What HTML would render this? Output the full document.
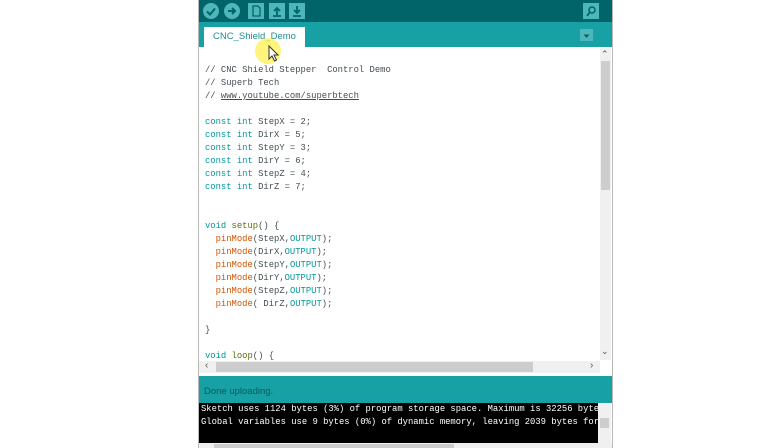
<!DOCTYPE html>
<html><head><style>
body{margin:0;width:768px;height:448px;background:#fff;position:relative;overflow:hidden;font-family:"Liberation Sans",sans-serif}
.a{position:absolute}
.code{font-family:"Liberation Mono",monospace;font-size:8.85px;color:#434f54;white-space:pre;line-height:13px}
.k{color:#00979c}.f{color:#5e6d03}.p{color:#d35400}
.btn{position:absolute;top:3px;width:16px;height:16px}
</style></head><body>
<div class="a" style="left:198px;top:0;width:415px;height:448px;background:#fff;border-left:1px solid #b8b8b8;border-right:1px solid #b8b8b8;box-sizing:border-box"></div>
<div class="a" style="left:199px;top:0;width:413px;height:22px;background:#006468"></div>
<div class="btn" style="left:203px;border-radius:50%;background:#4db7bb"><svg width="16" height="16"><path d="M4 8.5l3 3 5-6" stroke="#006468" stroke-width="2" fill="none"/></svg></div>
<div class="btn" style="left:224px;border-radius:50%;background:#4db7bb"><svg width="16" height="16"><path d="M4 8h7M8 5l3 3-3 3" stroke="#006468" stroke-width="2" fill="none"/></svg></div>
<div class="btn" style="left:248px;background:#4db7bb"><svg width="16" height="16"><path d="M5 3h5l2 2v8H5z" stroke="#006468" stroke-width="1.3" fill="none"/></svg></div>
<div class="btn" style="left:269px;background:#4db7bb"><svg width="16" height="16"><path d="M8 12V5M5 8l3-3 3 3M4 13h8" stroke="#006468" stroke-width="1.8" fill="none"/></svg></div>
<div class="btn" style="left:289px;background:#4db7bb"><svg width="16" height="16"><path d="M8 3v7M5 7l3 3 3-3M4 13h8" stroke="#006468" stroke-width="1.8" fill="none"/></svg></div>
<div class="btn" style="left:583px;background:#4db7bb"><svg width="16" height="16"><circle cx="9" cy="7" r="3" stroke="#006468" stroke-width="1.5" fill="none"/><path d="M7 9l-3 4" stroke="#006468" stroke-width="1.8"/></svg></div>
<div class="a" style="left:199px;top:22px;width:413px;height:25px;background:#17a1a5"></div>
<div class="a" style="left:204px;top:27px;width:101px;height:20px;background:#fff;font-size:9.5px;color:#1d8e93;line-height:20px;text-align:center">CNC_Shield_Demo</div>
<div class="a" style="left:255px;top:38px;width:26px;height:26px;border-radius:50%;background:rgba(255,240,80,.75)"></div>
<svg class="a" style="left:268px;top:45px" width="12" height="18"><path d="M1 1v13l3-3 2.5 5 2-1-2.5-5h4z" fill="#fff" stroke="#333" stroke-width="1"/></svg>
<div class="a" style="left:580px;top:29px;width:13px;height:12px;background:#4db7bb"><svg width="13" height="12"><path d="M3.5 4.5h6l-3 3.5z" fill="#006468"/></svg></div>
<div class="a code" style="left:205px;top:64px">// CNC Shield Stepper  Control Demo
// Superb Tech
// <u>www.youtube.com/superbtech</u>

<span class="k">const</span> <span class="k">int</span> StepX = 2;
<span class="k">const</span> <span class="k">int</span> DirX = 5;
<span class="k">const</span> <span class="k">int</span> StepY = 3;
<span class="k">const</span> <span class="k">int</span> DirY = 6;
<span class="k">const</span> <span class="k">int</span> StepZ = 4;
<span class="k">const</span> <span class="k">int</span> DirZ = 7;


<span class="k">void</span> <span class="f">setup</span>() {
  <span class="p">pinMode</span>(StepX,<span class="k">OUTPUT</span>);
  <span class="p">pinMode</span>(DirX,<span class="k">OUTPUT</span>);
  <span class="p">pinMode</span>(StepY,<span class="k">OUTPUT</span>);
  <span class="p">pinMode</span>(DirY,<span class="k">OUTPUT</span>);
  <span class="p">pinMode</span>(StepZ,<span class="k">OUTPUT</span>);
  <span class="p">pinMode</span>( DirZ,<span class="k">OUTPUT</span>);

}

<span class="k">void</span> <span class="f">loop</span>() {</div>
<div class="a" style="left:600px;top:48px;width:11px;height:312px;background:#f0f0f0"></div>
<div class="a" style="left:601px;top:61px;width:9px;height:129px;background:#cdcdcd"></div>
<div class="a" style="left:601px;top:49px;font-size:9px;color:#555">&#8963;</div>
<div class="a" style="left:601px;top:346px;font-size:9px;color:#555">&#8964;</div>
<div class="a" style="left:199px;top:361px;width:401px;height:12px;background:#f0f0f0"></div>
<div class="a" style="left:216px;top:362px;width:317px;height:10px;background:#cdcdcd"></div>
<div class="a" style="left:205px;top:360px;font-size:10px;color:#555">&lsaquo;</div>
<div class="a" style="left:590px;top:360px;font-size:10px;color:#555">&rsaquo;</div>
<div class="a" style="left:199px;top:376px;width:413px;height:27px;background:#17a1a5;font-size:9.5px;color:#0c5a5e;line-height:32px;padding-left:5px;box-sizing:border-box">Done uploading.</div>
<div class="a code" style="left:199px;top:403px;width:399px;height:40px;background:#000;color:#fff;overflow:hidden;padding:0 0 0 2px;box-sizing:border-box;line-height:13px;font-size:8.85px">Sketch uses 1124 bytes (3%) of program storage space. Maximum is 32256 bytes.
Global variables use 9 bytes (0%) of dynamic memory, leaving 2039 bytes for</div>
<div class="a" style="left:598px;top:403px;width:13px;height:40px;background:#f0f0f0"></div>
<div class="a" style="left:600px;top:418px;width:9px;height:10px;background:#cdcdcd"></div>
<div class="a" style="left:199px;top:443px;width:413px;height:5px;background:#f0f0f0"></div>
<div class="a" style="left:214px;top:444px;width:240px;height:4px;background:#cdcdcd"></div>
</body></html>
